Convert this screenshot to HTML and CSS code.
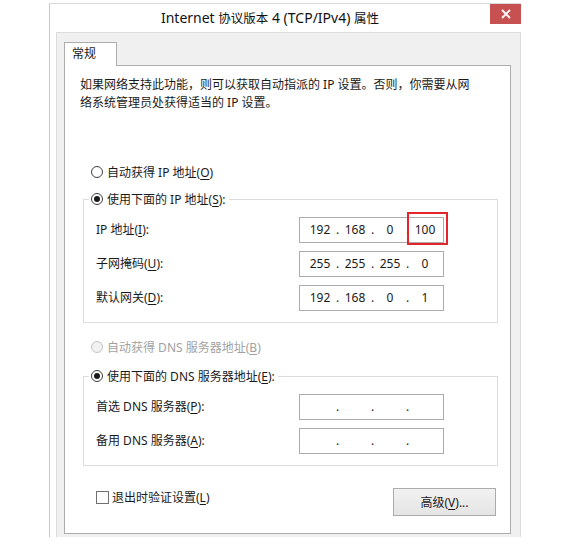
FILE: index.html
```html
<!DOCTYPE html>
<html lang="zh-CN">

<head>
  <meta charset="UTF-8">
  <title>Internet 协议版本 4 (TCP/IPv4) 属性</title>
  <link rel="stylesheet" href="styles.css">
</head>

<body>
  <div class="window">
    <div class="titlebar">
      <div class="title">Internet <span class="han">协议版本</span> 4 (TCP/IPv4) <span class="han">属性</span></div>
      <div class="close">
        <svg width="10" height="10" viewBox="0 0 10 10">
          <path d="M1 1 L9 9 M9 1 L1 9" stroke="#fff" stroke-width="1.8" fill="none" />
        </svg>
      </div>
    </div>

    <div class="client">
      <div class="tabstrip">
        <div class="tab">常规</div>
      </div>

      <div class="panel">
        <p class="desc">如果网络支持此功能，则可以获取自动指派的 IP 设置。否则，你需要从网<br>络系统管理员处获得适当的 IP 设置。</p>

        <!-- IP -->
        <div class="radio radio-first"><span class="dot"></span><span>自动获得 IP 地址(<u>O</u>)</span></div>

        <div class="group">
          <div class="radio group-head"><span class="dot checked"></span><span>使用下面的 IP 地址(<u>S</u>):</span></div>
          <div class="rows">
            <span>IP 地址(<u>I</u>):</span>
            <div class="ip">
              <span class="oct">192</span><span class="sep">.</span><span class="oct">168</span><span class="sep">.</span><span class="oct">0</span><span class="sep">.</span><span class="oct">100</span>
              <span class="mark"></span>
            </div>

            <span>子网掩码(<u>U</u>):</span>
            <div class="ip">
              <span class="oct">255</span><span class="sep">.</span><span class="oct">255</span><span class="sep">.</span><span class="oct">255</span><span class="sep">.</span><span class="oct">0</span>
            </div>

            <span>默认网关(<u>D</u>):</span>
            <div class="ip">
              <span class="oct">192</span><span class="sep">.</span><span class="oct">168</span><span class="sep">.</span><span class="oct">0</span><span class="sep">.</span><span class="oct">1</span>
            </div>
          </div>
        </div>

        <!-- DNS -->
        <div class="radio radio-dns disabled"><span class="dot"></span><span>自动获得 DNS 服务器地址(<u>B</u>)</span></div>

        <div class="group group-dns">
          <div class="radio group-head"><span class="dot checked"></span><span>使用下面的 DNS 服务器地址(<u>E</u>):</span></div>
          <div class="rows">
            <span>首选 DNS 服务器(<u>P</u>):</span>
            <div class="ip">
              <span class="oct"></span><span class="sep">.</span><span class="oct"></span><span class="sep">.</span><span class="oct"></span><span class="sep">.</span><span class="oct"></span>
            </div>

            <span>备用 DNS 服务器(<u>A</u>):</span>
            <div class="ip">
              <span class="oct"></span><span class="sep">.</span><span class="oct"></span><span class="sep">.</span><span class="oct"></span><span class="sep">.</span><span class="oct"></span>
            </div>
          </div>
        </div>

        <div class="footer">
          <div class="check"><span class="box"></span><span>退出时验证设置(<u>L</u>)</span></div>
          <button class="btn">高级(<u>V</u>)...</button>
        </div>
      </div>
    </div>
  </div>
</body>

</html>
```

FILE: styles.css
```css
* {
  box-sizing: border-box;
}

body {
  margin: 0;
  background: #fff;
  font-family: "Noto Sans", "Noto Sans CJK SC", sans-serif;
  font-size: 12px;
  color: #1a1a1a;
}

u {
  text-underline-offset: 2px;
}

/* window frame */
.window {
  width: 472px;
  margin: 3px 0 0 49px;
  border-left: 1px solid #c9c9c9;
  border-top: 1px solid #dadada;
  background: #fff;
}

.titlebar {
  display: flex;
  height: 28px;
}

.title {
  flex: 1;
  text-align: center;
  font-size: 14px;
  line-height: 28px;
  color: #111;
}

.title .han {
  font-size: 12.5px;
}

.close {
  width: 31px;
  height: 20px;
  background: #c75050;
  display: flex;
  align-items: center;
  justify-content: center;
}

.client {
  height: 505px;
  margin-left: 6px;
  padding: 9px 9px 0 7px;
  background: #f0f0f0;
  border: 1px solid #dcdcdc;
  border-bottom: none;
}

/* tab */
.tabstrip {
  display: flex;
  height: 24px;
}

.tab {
  width: 53px;
  padding: 2px 0 0 7px;
  line-height: 18px;
  background: #fff;
  border: 1px solid #adadad;
  border-bottom: none;
}

.tabstrip::after {
  content: "";
  flex: 1;
  border-bottom: 1px solid #adadad;
}

.panel {
  padding: 10px 12px 17px 15px;
  background: #fff;
  border: 1px solid #adadad;
  border-top: none;
}

.desc {
  margin: 0;
  line-height: 18px;
}

/* radio buttons */
.radio {
  display: flex;
  align-items: center;
  gap: 4px;
  height: 18px;
}

.dot {
  width: 12px;
  height: 12px;
  border-radius: 50%;
  border: 1px solid #3c3c3c;
  background: #fff;
  display: flex;
  align-items: center;
  justify-content: center;
}

.dot.checked::after {
  content: "";
  width: 6px;
  height: 6px;
  border-radius: 50%;
  background: #1a1a1a;
}

.radio.disabled {
  color: #a2a2a2;
}

.radio.disabled .dot {
  border-color: #c2c2c2;
  background: #f2f2f2;
}

.radio-first {
  margin: 51px 0 0 11px;
}

.radio-dns {
  margin: 15px 0 0 11px;
}

/* group boxes */
.group {
  margin: 18px 0 0 3px;
  padding-bottom: 11px;
  border: 1px solid #dcdcdc;
}

.group-dns {
  margin-top: 20px;
}

.group-head {
  width: fit-content;
  margin: -10px 0 0 5px;
  padding: 0 3px 0 2px;
  background: #fff;
}

.rows {
  display: grid;
  grid-template-columns: 203px 145px;
  row-gap: 8px;
  align-items: center;
  margin: 9px 0 0 12px;
  line-height: 18px;
}

.ip {
  position: relative;
  display: flex;
  align-items: center;
  height: 26px;
  padding-left: 5px;
  border: 1px solid #ababab;
  background: #fff;
}

.oct {
  width: 30px;
  text-align: center;
}

.sep {
  width: 5px;
  text-align: center;
}

/* red highlight round the last octet */
.mark {
  position: absolute;
  left: 107px;
  top: -6px;
  width: 41px;
  height: 33px;
  border: 2px solid #e4252b;
}

/* bottom row */
.footer {
  display: flex;
  justify-content: space-between;
  align-items: flex-start;
  margin: 22px 2px 0 16px;
}

.check {
  display: flex;
  align-items: center;
  gap: 3px;
  height: 18px;
}

.box {
  width: 13px;
  height: 13px;
  border: 1px solid #707070;
  background: #fff;
}

.btn {
  width: 103px;
  height: 28px;
  padding: 0;
  font-family: inherit;
  font-size: 12px;
  color: #1a1a1a;
  border: 1px solid #acacac;
  background: linear-gradient(#f2f2f2, #e4e4e4);
}
```
